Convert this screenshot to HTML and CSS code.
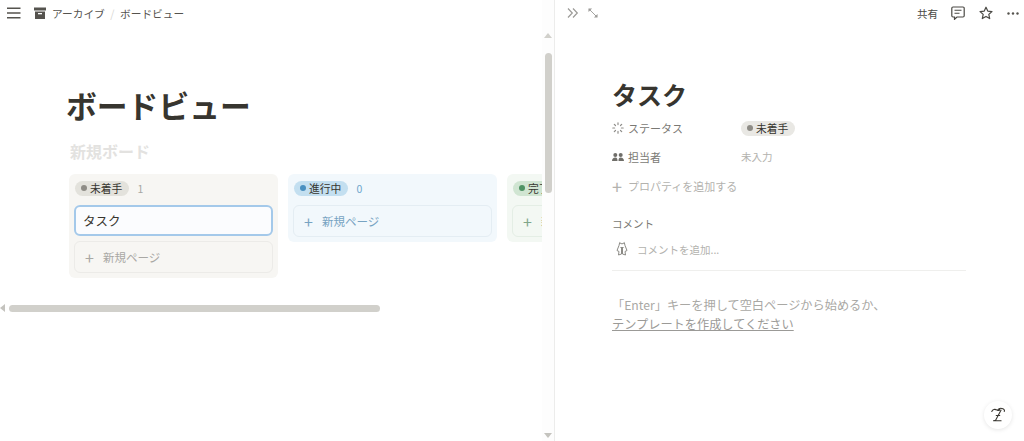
FILE: index.html
```html
<!DOCTYPE html>
<html lang="ja">
<head>
<meta charset="utf-8">
<title>ボードビュー</title>
<link rel="stylesheet" href="styles.css">
</head>
<body>
<div class="app">
  <main class="left">
    <header class="crumbs">
      <svg class="menu-icon" width="14" height="12" viewBox="0 0 14 12"><path d="M0 1.200h13.500M0 6h13.500M0 10.800h13.500" stroke="#55534e" stroke-width="1.400"/></svg>
      <svg class="archive-icon" width="12" height="12" viewBox="0 0 12 12"><path d="M0 .5h12v3H0z" fill="#55534e"/><path d="M1 4.500h10V12H1z" fill="#55534e"/><path d="M4 6h4v1.300H4z" fill="#fff"/></svg>
      <span class="crumb">アーカイブ</span>
      <span class="slash">/</span>
      <span class="crumb">ボードビュー</span>
    </header>
    <section class="doc">
      <h1 class="page-title">ボードビュー</h1>
      <h2 class="board-title">新規ボード</h2>
      <div class="board">
        <div class="column col-gray">
          <div class="col-head">
            <span class="tag tag-gray"><i class="dot"></i>未着手</span><span class="count">1</span>
          </div>
          <div class="card">タスク</div>
          <div class="add-card"><span class="plus">+</span>新規ページ</div>
        </div>
        <div class="column col-blue">
          <div class="col-head">
            <span class="tag tag-blue"><i class="dot"></i>進行中</span><span class="count">0</span>
          </div>
          <div class="add-card"><span class="plus">+</span>新規ページ</div>
        </div>
        <div class="column col-green">
          <div class="col-head">
            <span class="tag tag-green"><i class="dot"></i>完了</span><span class="count">0</span>
          </div>
          <div class="add-card"><span class="plus">+</span>新規ページ</div>
        </div>
      </div>
    </section>
    <div class="hbar-arrow"></div>
    <div class="hbar"></div>
    <div class="vtrack">
      <i class="arrow-up"></i>
      <i class="vthumb"></i>
      <i class="arrow-down"></i>
    </div>
  </main>
  <aside class="right">
    <header class="peek-bar">
      <svg class="peek-icon" width="12" height="10" viewBox="0 0 12 10"><path d="M1 .5 5.300 5 1 9.500M6 .5 10.300 5 6 9.500" fill="none" stroke="#9b9a97" stroke-width="1.200"/></svg>
      <svg class="peek-icon2" width="10" height="10" viewBox="0 0 11 11"><path d="M2 2l7 7" stroke="#9b9a97" stroke-width="1"/><path d="M.5.500h4l-4 4zM10.500 10.500h-4l4-4z" fill="#9b9a97"/></svg>
      <span class="spacer"></span>
      <span class="share">共有</span>
      <svg class="act" width="14" height="14" viewBox="0 0 14 14"><path d="M2 1h10a1.200 1.200 0 0 1 1.200 1.200v7.600A1.200 1.200 0 0 1 12 11H6l-2.500 2.300V11H2A1.200 1.200 0 0 1 .8 9.800V2.200A1.200 1.200 0 0 1 2 1z" fill="none" stroke="#4a4944" stroke-width="1.200"/><path d="M3.500 4.200h7M3.500 7.200h5" stroke="#4a4944" stroke-width="1.100"/></svg>
      <svg class="act" width="14" height="14" viewBox="0 0 14 14"><path d="M7 1.200l1.750 3.900 4.250.45-3.200 2.850.9 4.200L7 10.450 3.300 12.600l.9-4.200L1 5.550l4.250-.45z" fill="none" stroke="#4a4944" stroke-width="1.200" stroke-linejoin="round"/></svg>
      <svg class="act more" width="12" height="3" viewBox="0 0 12 3"><circle cx="1.500" cy="1.500" r="1.200" fill="#55534e"/><circle cx="6" cy="1.500" r="1.200" fill="#55534e"/><circle cx="10.500" cy="1.500" r="1.200" fill="#55534e"/></svg>
    </header>
    <article class="peek">
      <h1 class="task-title">タスク</h1>
      <div class="props">
        <div class="prop">
          <span class="prop-name">
            <svg width="12" height="12" viewBox="0 0 12 12"><g stroke="#8f8e8a" stroke-width="1.200" stroke-linecap="round"><path d="M6 .8v1.800M6 9.400v1.800M.8 6h1.800M9.400 6h1.800M2.300 2.300l1.200 1.200M8.500 8.500l1.200 1.200M2.300 9.700l1.200-1.200M8.500 3.500l1.200-1.200"/></g></svg>
            ステータス
          </span>
          <span class="tag tag-gray-light"><i class="dot"></i>未着手</span>
        </div>
        <div class="prop">
          <span class="prop-name">
            <svg width="12" height="12" viewBox="0 0 12 12"><g fill="#6f6e69"><circle cx="3.300" cy="4" r="2"/><circle cx="8.700" cy="4" r="2"/><path d="M0 10c0-2.200 1.400-3.400 3.300-3.400S5.500 8 5.500 10zM6.500 10c0-2.200.4-3.400 2.200-3.400S12 7.800 12 10z"/></g></svg>
            担当者
          </span>
          <span class="empty">未入力</span>
        </div>
        <div class="add-prop"><span class="add-plus">+</span>プロパティを追加する</div>
      </div>
      <div class="comments">
        <div class="comment-label">コメント</div>
        <div class="comment-row">
          <svg width="12" height="16" viewBox="0 0 12 16"><path d="M3 4.500 3.700 1.500 5 2.700h2l1.300-1.200.7 3M3 4.500 1 9.500l2 1-.5 3.500 3-1V6M9 4.500l2 5-2 1 .5 3.500-3-1V6M4 6.500h.6M7.400 6.500H8" fill="none" stroke="#8b8a85" stroke-width="1"/></svg>
          <span>コメントを追加...</span>
        </div>
      </div>
      <p class="hint">「Enter」キーを押して空白ページから始めるか、<br><a class="hint-link" href="#">テンプレートを作成してください</a></p>
    </article>
    <div class="help">
      <svg width="16" height="18" viewBox="0 0 18 20"><path d="M2 6c1-2.500 3.500-3 6-1.500 1.500.9 3 .5 3-1M8.500 4.500c1.500-2 4-2.500 6-1.500s2 2.500 1.500 3M12.500 4.500 6 16.500h6.500M4 16.500c1-.5 1.500-.5 2 0M7 10.500h4" fill="none" stroke="#37352f" stroke-width="1.200" stroke-linecap="round"/></svg>
    </div>
  </aside>
</div>
</body>
</html>
```
FILE: styles.css
```css
* { box-sizing: border-box; }
html, body { margin: 0; height: 441px; overflow: hidden; background: #fff; }
body { font-family: "Noto Sans CJK JP", "Noto Sans", sans-serif; color: #37352f; }
.app { display: flex; height: 441px; }

.left { position: relative; width: 555px; flex: none; border-right: 1px solid #ececeb; overflow: hidden; }
.crumbs { display: flex; align-items: center; height: 26px; padding-left: 7px; font-size: 10.700px; color: #55534e; }
.menu-icon { margin-right: 13px; }
.archive-icon { margin-right: 6px; }
.slash { margin: 0 5.500px; color: #d8d7d4; }

.doc { padding: 54px 0 0 67px; width: 543px; overflow: hidden; }
.page-title { margin: 0 0 0 -1px; font-size: 30.800px; line-height: 50px; font-weight: 700; height: 50px; white-space: nowrap; }
.board-title { margin: 10px 0 0 3px; font-size: 16px; line-height: 22px; font-weight: 700; color: #e3e2e0; }
.board { display: flex; gap: 10px; margin: 12px 0 0 2px; width: 700px; align-items: flex-start; }
.column { width: 209px; flex: none; border-radius: 6px; padding: 6px 5px 5px; }
.col-gray { background: #f7f6f3; }
.col-blue { background: #f2f8fc; }
.col-green { background: #f3f8f3; }
.col-head { display: flex; align-items: center; height: 16px; margin-bottom: 9px; padding-left: 1px; }
.tag { display: inline-flex; align-items: center; height: 15px; border-radius: 8px; padding: 0 7px 0 6px; font-size: 10.800px; white-space: nowrap; }
.dot { width: 6px; height: 6px; border-radius: 50%; margin-right: 3px; background: #8e8c86; }
.tag-gray { background: #e3e2dc; }
.tag-blue { background: #c3dff0; }
.tag-blue .dot { background: #4a90c0; }
.tag-green { background: #d0e5d2; }
.tag-green .dot { background: #4f9364; }
.tag-gray-light { background: #e9e8e4; }
.count { margin-left: 8px; font-size: 10.500px; color: #a8a7a3; }
.col-blue .count { color: #6ea6cc; }
.col-green .count { color: #7fae8a; }
.card { height: 31px; margin-bottom: 5px; padding-left: 7px; background: #fbfcfe; border: 2px solid #a4c9ea; border-radius: 6px; font-size: 12.500px; line-height: 27px; }
.add-card { display: flex; align-items: center; height: 32px; padding-left: 10px; border: 1px solid #ecebe8; border-radius: 6px; font-size: 11.500px; color: #a9a8a4; }
.col-blue .add-card { color: #77a3c2; border-color: #e4edf3; }
.col-green .add-card { color: #7fa68a; border-color: #e4eee5; }
.plus { width: 18px; font-size: 16px; line-height: 16px; }

.hbar { position: absolute; left: 9px; top: 305px; width: 371px; height: 7px; border-radius: 4px; background: #d1d0cb; }
.hbar-arrow { position: absolute; left: 0; top: 304px; border-top: 4.500px solid transparent; border-bottom: 4.500px solid transparent; border-right: 5px solid #c4c3be; }
.vtrack { position: absolute; top: 0; right: 0; width: 12px; height: 441px; background: #fdfdfd; }
.vthumb { position: absolute; left: 3px; top: 53px; width: 7px; height: 140px; border-radius: 4px; background: #d1d0cb; }
.arrow-up, .arrow-down { position: absolute; left: 2px; border-left: 4px solid transparent; border-right: 4px solid transparent; }
.arrow-up { top: 33px; border-bottom: 5px solid #d1d0cb; }
.arrow-down { top: 433px; border-top: 5px solid #c4c3be; }

.right { position: relative; flex: 1; min-width: 0; }
.peek-bar { display: flex; align-items: center; height: 26px; padding: 0 5px 0 12px; }
.peek-icon { margin-right: 9px; }
.spacer { flex: 1; }
.share { font-size: 10.500px; color: #4a4944; margin-right: 13px; }
.act { margin-right: 14px; }
.act.more { margin-right: 0; }

.peek { width: 354px; margin-left: 57px; padding-top: 48px; }
.task-title { margin: 0; font-size: 25px; line-height: 40px; font-weight: 700; height: 40px; }
.prop { display: flex; align-items: center; height: 28.500px; font-size: 11px; }
.prop-name { display: flex; align-items: center; gap: 4px; width: 129px; color: #7a7974; }
.empty { color: #b3b2ae; font-size: 10.500px; }
.add-prop { display: flex; align-items: center; height: 29px; font-size: 11px; color: #b3b2ae; }
.add-plus { width: 16px; font-size: 18px; line-height: 18px; color: #b3b2ae; }
.comments { margin-top: 16px; padding-bottom: 13px; border-bottom: 1px solid #efefed; }
.comment-label { font-size: 10.500px; line-height: 16px; color: #7a7974; }
.comment-row { display: flex; align-items: center; gap: 9px; margin-top: 9px; padding-left: 4px; height: 16px; font-size: 10.500px; color: #b3b2ae; }
.hint { margin: 25px 0 0; font-size: 12.200px; line-height: 19px; color: #a9a8a4; }
.hint-link { color: #9b9a97; text-decoration: underline; }
.help { position: absolute; right: 12px; bottom: 12px; width: 28px; height: 28px; border-radius: 50%; display: flex; align-items: center; justify-content: center; background: #fff; box-shadow: 0 1px 4px rgba(0,0,0,.1); }
```
